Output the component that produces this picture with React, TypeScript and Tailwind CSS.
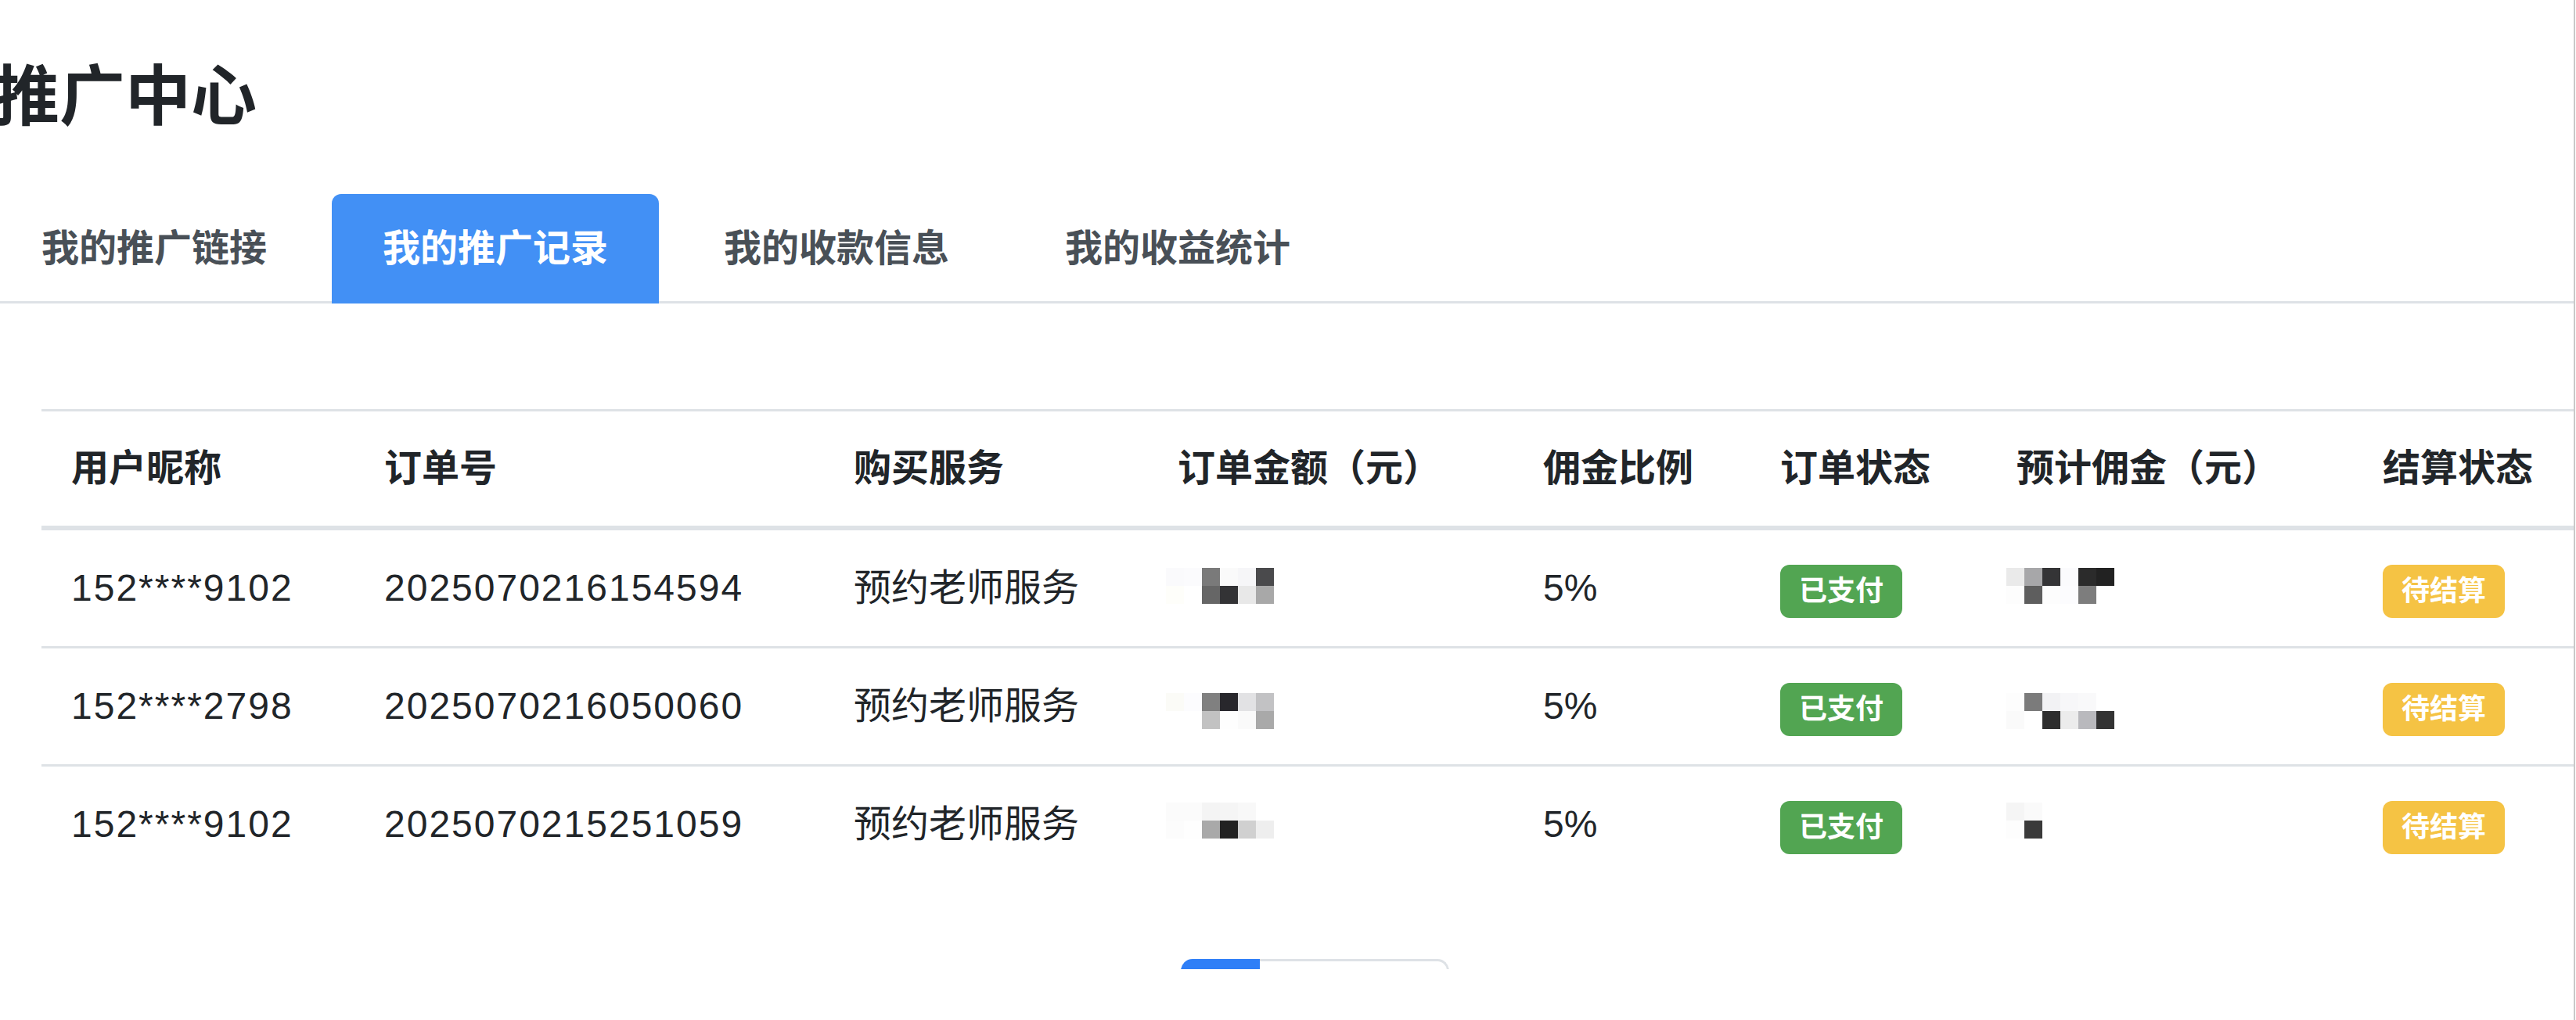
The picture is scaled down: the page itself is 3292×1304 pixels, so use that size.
import React from "react";

type Cell = string;
type MosaicData = { rows: Cell[][]; shift: string };

type Row = {
  user: string;
  order: string;
  service: string;
  amount: MosaicData;
  rate: string;
  commission: MosaicData;
};

const rows: Row[] = [
  {
    user: "152****9102",
    order: "2025070216154594",
    service: "预约老师服务",
    amount: {
      shift: "-mt-[6px]",
      rows: [
        ["bg-[#fafafc]", "bg-[#fbfbfd]", "bg-[#7a7a7a]", "bg-[#fafafa]", "bg-[#f6f6f8]", "bg-[#4a4a4c]"],
        ["bg-[#fefefa]", "bg-[#ffffff]", "bg-[#666666]", "bg-[#333335]", "bg-[#e8e8e8]", "bg-[#a8a8a8]"],
      ],
    },
    rate: "5%",
    commission: {
      shift: "-mt-[6px]",
      rows: [
        ["bg-[#eaeaea]", "bg-[#a7a7a9]", "bg-[#343436]", "bg-[#fbfbfd]", "bg-[#2b2b2b]", "bg-[#222222]"],
        ["bg-[#fdfdfd]", "bg-[#5e5e5e]", "bg-[#fdfdfd]", "bg-[#fcfcfe]", "bg-[#7d7d7d]", "bg-[#ffffff]"],
      ],
    },
  },
  {
    user: "152****2798",
    order: "2025070216050060",
    service: "预约老师服务",
    amount: {
      shift: "mt-[12px]",
      rows: [
        ["bg-[#fbfbf7]", "bg-[#fcfcfe]", "bg-[#808080]", "bg-[#28272c]", "bg-[#e2e2e4]", "bg-[#c2c2c4]"],
        ["bg-[#ffffff]", "bg-[#ffffff]", "bg-[#c2c2c2]", "bg-[#fefefe]", "bg-[#fafafa]", "bg-[#a9a9a9]"],
      ],
    },
    rate: "5%",
    commission: {
      shift: "mt-[12px]",
      rows: [
        ["bg-[#fdfdfd]", "bg-[#7b7b7b]", "bg-[#f2f2f4]", "bg-[#f7f7f9]", "bg-[#f9f9fa]", "bg-[#ffffff]"],
        ["bg-[#fafafa]", "bg-[#ffffff]", "bg-[#2e2e2e]", "bg-[#ececec]", "bg-[#b9b9bd]", "bg-[#333333]"],
      ],
    },
  },
  {
    user: "152****9102",
    order: "2025070215251059",
    service: "预约老师服务",
    amount: {
      shift: "-mt-[10px]",
      rows: [
        ["bg-[#fbfbfb]", "bg-[#fbfbfb]", "bg-[#f4f4f4]", "bg-[#f5f5f5]", "bg-[#f8f8f8]", "bg-[#ffffff]"],
        ["bg-[#fcfcfc]", "bg-[#fefefe]", "bg-[#a9a9a9]", "bg-[#222222]", "bg-[#d0d0d0]", "bg-[#eeeeee]"],
      ],
    },
    rate: "5%",
    commission: {
      shift: "-mt-[10px]",
      rows: [
        ["bg-[#f5f5f5]", "bg-[#fafafa]"],
        ["bg-[#fdfdfd]", "bg-[#3a3a3a]"],
      ],
    },
  },
];

const tabs = ["我的推广链接", "我的推广记录", "我的收款信息", "我的收益统计"];
const headers = ["用户昵称", "订单号", "购买服务", "订单金额（元）", "佣金比例", "订单状态", "预计佣金（元）", "结算状态"];

const grid = "grid grid-cols-[400px_600px_414px_467px_303px_302px_468px_282px]";

function Mosaic({ data, offset }: { data: MosaicData; offset: string }) {
  return (
    <div className={`flex flex-col ${offset} ${data.shift}`}>
      {data.rows.map((r, i) => (
        <div key={i} className="flex">
          {r.map((c, j) => (
            <div key={j} className={`h-[23px] w-[23px] ${c}`} />
          ))}
        </div>
      ))}
    </div>
  );
}

function Badge({ text, tone }: { text: string; tone: "green" | "yellow" }) {
  const color = tone === "green" ? "bg-[#52a552]" : "bg-[#f5c344]";
  return (
    <span
      className={`mt-[8px] inline-flex h-[68px] items-center rounded-[12px] px-[24px] text-[36px] font-bold leading-none text-white ${color}`}
    >
      {text}
    </span>
  );
}

export default function App() {
  return (
    <div className="flex h-[1304px] w-[3292px] overflow-hidden bg-white font-['Liberation_Sans','Noto_Sans_CJK_SC',sans-serif] text-[#212529]">
      <main className="w-[3289px] shrink-0 pt-[82px]">
        <h1 className="ml-[-8px] text-[84px] font-bold leading-[84px]">推广中心</h1>

        <nav className="mt-[82px] flex h-[140px] items-start border-b-[3px] border-[#dee2e6]">
          <div className="ml-[-12px] flex gap-[18px]">
            {tabs.map((t, i) => (
              <div
                key={t}
                className={`mb-[-3px] flex h-[140px] items-center px-[65px] text-[48px] font-bold leading-[72px] ${
                  i === 1 ? "rounded-t-[12px] bg-[#4290f5] text-white" : "text-[#495057]"
                }`}
              >
                {t}
              </div>
            ))}
          </div>
        </nav>

        <section className="ml-[53px] mt-[135px] w-[3236px]">
          <div className="border-t-[3px] border-[#dee2e6]">
            <div className={`${grid} h-[152px] items-center border-b-[6px] border-[#dee2e6] text-[48px] font-bold leading-[72px]`}>
              {headers.map((h) => (
                <div key={h} className="pl-[38px]">
                  {h}
                </div>
              ))}
            </div>

            {rows.map((r, i) => (
              <div
                key={i}
                className={`${grid} items-center text-[48px] leading-[72px] ${
                  i < rows.length - 1 ? "h-[151px] border-b-[3px] border-[#dee2e6]" : "h-[148px]"
                }`}
              >
                <div className="pl-[38px] tracking-[2px]">{r.user}</div>
                <div className="pl-[38px] tracking-[2px]">{r.order}</div>
                <div className="pl-[38px]">{r.service}</div>
                <div className="flex items-center pl-[38px]">
                  <Mosaic data={r.amount} offset="ml-[-15px]" />
                </div>
                <div className="pl-[38px]">{r.rate}</div>
                <div className="flex items-center pl-[38px]">
                  <Badge text="已支付" tone="green" />
                </div>
                <div className="flex items-center pl-[38px]">
                  <Mosaic data={r.commission} offset="ml-[-13px]" />
                </div>
                <div className="flex items-center pl-[38px]">
                  <Badge text="待结算" tone="yellow" />
                </div>
              </div>
            ))}
          </div>

          {/* pager strip, only its top edge shows above the fold */}
          <div className="mt-[98px] flex h-[13px] justify-center overflow-hidden pl-[18px]">
            <div className="flex">
              <span className="h-[110px] w-[101px] rounded-tl-[15px] bg-[#2f7ff7]" />
              <span className="h-[110px] w-[242px] rounded-tr-[15px] border-r-[3px] border-t-[3px] border-[#dee2e6]" />
            </div>
          </div>
        </section>
      </main>
      <div className="w-[2px] shrink-0 bg-[#c9c9c9]" />
    </div>
  );
}
